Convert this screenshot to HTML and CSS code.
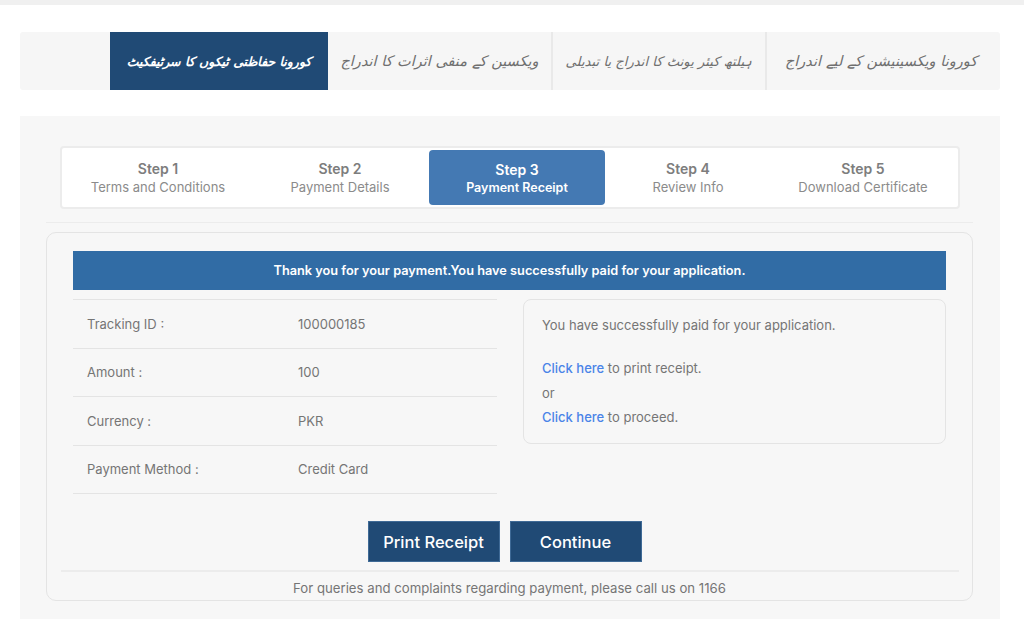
FILE: index.html
```html
<!DOCTYPE html>
<html lang="en">
<head>
    <meta charset="UTF-8">
    <meta name="viewport" content="width=device-width, initial-scale=1.0">
    <title>Payment Receipt</title>
    <link rel="stylesheet" href="styles.css">
</head>
<body>
    <div class="top-bar"></div>

    <!-- Urdu tabs -->
    <nav class="tabs" dir="rtl" lang="ur">
        <a class="tab tab-vaccine" href="#">کورونا ویکسینیشن کے لیے اندراج</a>
        <a class="tab tab-unit" href="#">ہیلتھ کیئر یونٹ کا اندراج یا تبدیلی</a>
        <a class="tab tab-effects" href="#">ویکسین کے منفی اثرات کا اندراج</a>
        <a class="tab tab-certificate active" href="#">کورونا حفاظتی ٹیکوں کا سرٹیفکیٹ</a>
    </nav>

    <main class="panel">
        <!-- Steps -->
        <div class="steps">
            <div class="step"><strong>Step 1</strong><span>Terms and Conditions</span></div>
            <div class="step"><strong>Step 2</strong><span>Payment Details</span></div>
            <div class="step current"><strong>Step 3</strong><span>Payment Receipt</span></div>
            <div class="step"><strong>Step 4</strong><span>Review Info</span></div>
            <div class="step"><strong>Step 5</strong><span>Download Certificate</span></div>
        </div>
        <hr class="rule steps-rule">

        <section class="card">
            <div class="banner">Thank you for your payment.You have successfully paid for your application.</div>

            <div class="details">
                <div class="rows">
                    <div class="row"><span class="label">Tracking ID :</span><span>100000185</span></div>
                    <div class="row"><span class="label">Amount :</span><span>100</span></div>
                    <div class="row"><span class="label">Currency :</span><span>PKR</span></div>
                    <div class="row"><span class="label">Payment Method :</span><span>Credit Card</span></div>
                </div>
                <div class="info">
                    <p class="info-lead">You have successfully paid for your application.</p>
                    <p><a href="#">Click here</a> to print receipt.</p>
                    <p>or</p>
                    <p><a href="#">Click here</a> to proceed.</p>
                </div>
            </div>

            <div class="actions">
                <button>Print Receipt</button>
                <button>Continue</button>
            </div>
            <hr class="rule">
            <p class="note">For queries and complaints regarding payment, please call us on 1166</p>
        </section>
    </main>
</body>
</html>
```
FILE: styles.css
```css
body {
    font-family: Inter, "Open Sans", sans-serif;
    font-size: 13px;
    color: #757575;
    background-color: #fff;
    margin: 0;
}

.top-bar {
    height: 5px;
    background-color: #f0f0f0;
}

.tabs {
    display: flex;
    height: 58px;
    margin: 27px 24px 0 20px;
    padding-left: 90px;
    background-color: #f6f6f6;
    border-radius: 3px;
}

.tab {
    display: flex;
    align-items: center;
    justify-content: center;
    font-family: "DejaVu Sans", sans-serif;
    font-style: italic;
    font-size: 14.5px;
    color: #6f6f6f;
    text-decoration: none;
    white-space: nowrap;
    border-left: 2px solid #e9e9e9;
    box-sizing: border-box;
}

.tab-vaccine { width: 235px; padding-right: 5px; }
.tab-unit { width: 214px; font-size: 13.2px; }
.tab-effects { width: 223px; border-left: none; }
.tab-certificate { width: 218px; border-left: none; }

.tab.active {
    background-color: #204a75;
    color: #fff;
    font-weight: bold;
    font-size: 12.5px;
}

.panel {
    margin: 26px 24px 0 20px;
    height: 503px;
    padding: 30px 27px 0 26px;
    box-sizing: border-box;
    background-color: #f7f7f7;
}

.steps {
    display: grid;
    grid-template-columns: 186px 178px 176px 166px 184px;
    margin: 0 13px 0 14px;
    padding: 2px 3px;
    height: 63px;
    box-sizing: border-box;
    background-color: #fff;
    border: 2px solid #ececec;
    border-radius: 4px;
}

.step {
    display: flex;
    flex-direction: column;
    align-items: center;
    justify-content: center;
    gap: 2px;
    border-radius: 4px;
    color: #8b8b8b;
}

.step strong {
    font-size: 14px;
    font-weight: 600;
    color: #7d7d7d;
}

.step.current,
.step.current strong {
    background-color: #4479b3;
    color: #fff;
    font-weight: 600;
}

.step.current span {
    font-size: 12.5px;
}

.rule {
    margin: 0 13px 0 14px;
    border: none;
    border-top: 2px solid #ececec;
}

.steps-rule {
    margin: 13px 0 9px;
    border-top-width: 1px;
}

.card {
    height: 369px;
    box-sizing: border-box;
    padding: 18px 0 0;
    border: 1px solid #e4e4e4;
    border-radius: 10px;
}

.banner {
    margin: 0 26px;
    height: 39px;
    line-height: 39px;
    text-align: center;
    font-size: 12.75px;
    font-weight: 600;
    color: #fff;
    background-color: #316ca5;
}

.details {
    display: grid;
    grid-template-columns: 424px 423px;
    column-gap: 26px;
    margin: 9px 26px 0;
}

.rows {
    border-top: 1px solid #e4e4e4;
}

.row {
    display: grid;
    grid-template-columns: 211px 1fr;
    align-items: center;
    height: 47.5px;
    padding-left: 14px;
    border-bottom: 1px solid #e4e4e4;
}

.info {
    height: 145px;
    box-sizing: border-box;
    padding: 18px 18px 0;
    border: 1px solid #e4e4e4;
    border-radius: 8px;
}

.info p {
    margin: 0 0 9.5px;
    line-height: 15px;
}

.info .info-lead {
    margin-bottom: 28px;
}

.info a {
    color: #4a84e8;
    text-decoration: none;
    font-weight: 500;
}

.actions {
    display: flex;
    justify-content: center;
    gap: 10px;
    margin: 27px 0 8px 0;
    padding-right: 10px;
}

button {
    width: 132px;
    height: 41px;
    font-family: inherit;
    font-size: 16.5px;
    font-weight: 500;
    color: #fff;
    background-color: #204a75;
    border: 1px solid #3f6a96;
    padding: 0;
}

.note {
    margin: 8px 0 0;
    text-align: center;
    font-size: 13.2px;
}
```
